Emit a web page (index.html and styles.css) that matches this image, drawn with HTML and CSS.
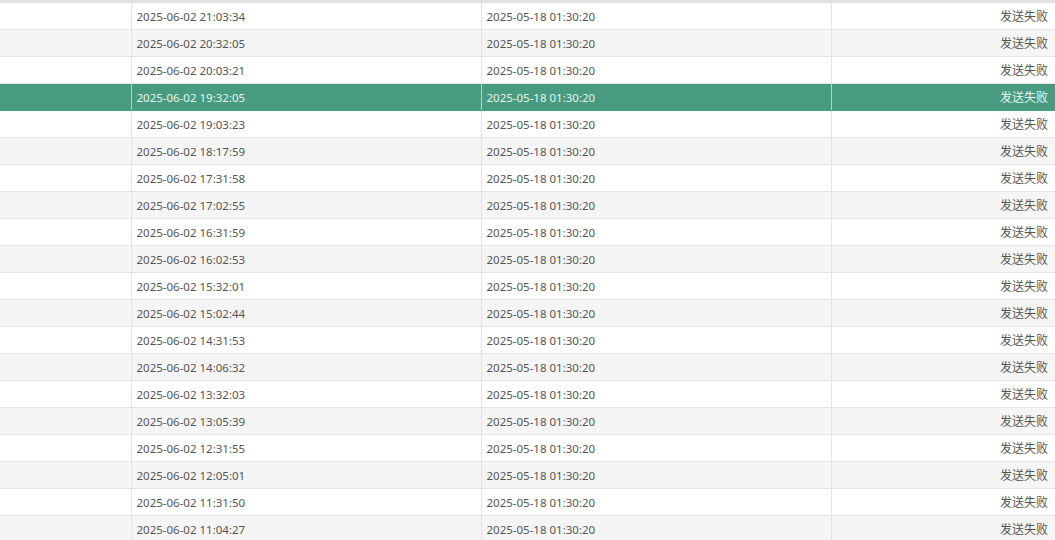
FILE: index.html
```html
<!DOCTYPE html>
<html lang="zh-CN">
<head>
  <meta charset="UTF-8" />
  <title>发送记录</title>
  <link rel="stylesheet" href="styles.css">
</head>
<body>
  <div class="grid-head-line"></div>
  <table class="log-table">
    <colgroup>
      <col class="col-a"><col class="col-b"><col class="col-c"><col class="col-d">
    </colgroup>
    <tbody>
      <tr><td></td><td>2025-06-02 21:03:34</td><td>2025-05-18 01:30:20</td><td class="status">发送失败</td></tr>
      <tr><td></td><td>2025-06-02 20:32:05</td><td>2025-05-18 01:30:20</td><td class="status">发送失败</td></tr>
      <tr><td></td><td>2025-06-02 20:03:21</td><td>2025-05-18 01:30:20</td><td class="status">发送失败</td></tr>
      <tr class="selected"><td></td><td>2025-06-02 19:32:05</td><td>2025-05-18 01:30:20</td><td class="status">发送失败</td></tr>
      <tr><td></td><td>2025-06-02 19:03:23</td><td>2025-05-18 01:30:20</td><td class="status">发送失败</td></tr>
      <tr><td></td><td>2025-06-02 18:17:59</td><td>2025-05-18 01:30:20</td><td class="status">发送失败</td></tr>
      <tr><td></td><td>2025-06-02 17:31:58</td><td>2025-05-18 01:30:20</td><td class="status">发送失败</td></tr>
      <tr><td></td><td>2025-06-02 17:02:55</td><td>2025-05-18 01:30:20</td><td class="status">发送失败</td></tr>
      <tr><td></td><td>2025-06-02 16:31:59</td><td>2025-05-18 01:30:20</td><td class="status">发送失败</td></tr>
      <tr><td></td><td>2025-06-02 16:02:53</td><td>2025-05-18 01:30:20</td><td class="status">发送失败</td></tr>
      <tr><td></td><td>2025-06-02 15:32:01</td><td>2025-05-18 01:30:20</td><td class="status">发送失败</td></tr>
      <tr><td></td><td>2025-06-02 15:02:44</td><td>2025-05-18 01:30:20</td><td class="status">发送失败</td></tr>
      <tr><td></td><td>2025-06-02 14:31:53</td><td>2025-05-18 01:30:20</td><td class="status">发送失败</td></tr>
      <tr><td></td><td>2025-06-02 14:06:32</td><td>2025-05-18 01:30:20</td><td class="status">发送失败</td></tr>
      <tr><td></td><td>2025-06-02 13:32:03</td><td>2025-05-18 01:30:20</td><td class="status">发送失败</td></tr>
      <tr><td></td><td>2025-06-02 13:05:39</td><td>2025-05-18 01:30:20</td><td class="status">发送失败</td></tr>
      <tr><td></td><td>2025-06-02 12:31:55</td><td>2025-05-18 01:30:20</td><td class="status">发送失败</td></tr>
      <tr><td></td><td>2025-06-02 12:05:01</td><td>2025-05-18 01:30:20</td><td class="status">发送失败</td></tr>
      <tr><td></td><td>2025-06-02 11:31:50</td><td>2025-05-18 01:30:20</td><td class="status">发送失败</td></tr>
      <tr><td></td><td>2025-06-02 11:04:27</td><td>2025-05-18 01:30:20</td><td class="status">发送失败</td></tr>
    </tbody>
  </table>
</body>
</html>
```

FILE: styles.css
```css
body {
  margin: 0;
  background: #fff;
  font-family: "Noto Sans", "Noto Sans CJK SC", sans-serif;
  overflow: hidden;
}

.grid-head-line {
  height: 3px;
  background: #e2e2e2;
}

.log-table {
  width: 1055px;
  border-collapse: collapse;
  table-layout: fixed;
  font-size: 11.5px;
  color: #555;
}

.col-a { width: 131px; }
.col-b { width: 350px; }
.col-c { width: 350px; }
.col-d { width: 224px; }

.log-table td {
  height: 26px;
  padding: 2px 0 0 5px;
  border-bottom: 1px solid #e3e3e3;
  border-right: 1px solid #e3e3e3;
  white-space: nowrap;
  line-height: 24px;
  box-sizing: border-box;
}

.log-table td:first-child {
  padding: 0;
}

.log-table td:last-child {
  border-right: none;
}

.log-table tr:nth-child(even) td {
  background: #f5f5f5;
}

.log-table td.status {
  text-align: right;
  font-size: 12px;
  padding: 2px 7px 0 0;
}

.log-table tr.selected td {
  background: #489a80;
  color: #e4f6ee;
  border-right-color: #a9d6c5;
  border-bottom-color: #489a80;
}
```
